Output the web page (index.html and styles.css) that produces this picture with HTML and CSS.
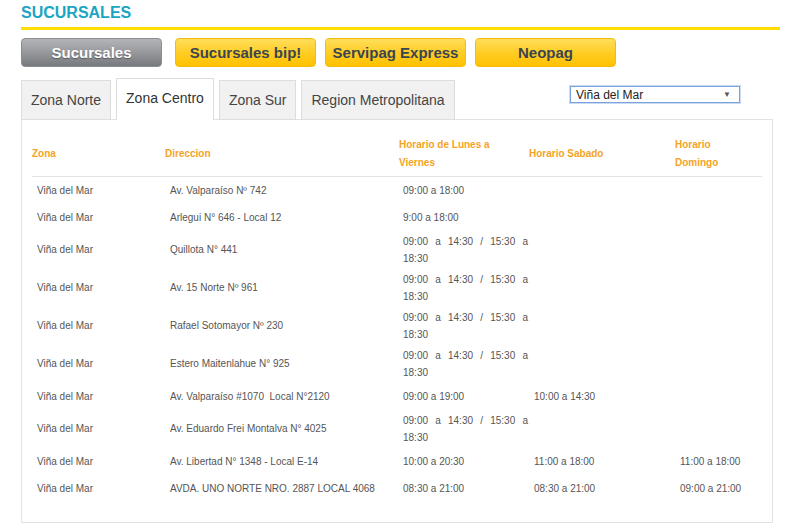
FILE: index.html
```html
<!DOCTYPE html>
<html lang="es">
<head>
<meta charset="utf-8">
<title>Sucursales</title>
<link rel="stylesheet" href="styles.css">
</head>
<body>
<div class="page">
  <h1 class="title">SUCURSALES</h1>
  <div class="rule"></div>
  <div class="btns">
    <a class="btn btn-gray">Sucursales</a>
    <a class="btn btn-yellow">Sucursales bip!</a>
    <a class="btn btn-yellow">Servipag Express</a>
    <a class="btn btn-yellow">Neopag</a>
  </div>
  <div class="zones">
    <div class="tabbar">
      <div class="tab">Zona Norte</div>
      <div class="tab active">Zona Centro</div>
      <div class="tab">Zona Sur</div>
      <div class="tab">Region Metropolitana</div>
      <div class="select"><span>Viña del Mar</span><span class="arrow">▼</span></div>
    </div>
    <div class="panel">
      <table class="grid">
        <colgroup>
          <col class="c1"><col class="c2"><col class="c3"><col class="c4"><col class="c5">
        </colgroup>
        <thead>
          <tr>
            <th>Zona</th>
            <th>Direccion</th>
            <th>Horario de Lunes a Viernes</th>
            <th>Horario Sabado</th>
            <th>Horario Domingo</th>
          </tr>
        </thead>
        <tbody>
          <tr><td>Viña del Mar</td><td>Av. Valparaíso Nº 742</td><td class="j">09:00 a 18:00</td><td></td><td></td></tr>
          <tr><td>Viña del Mar</td><td>Arlegui N° 646 - Local 12</td><td class="j">9:00 a 18:00</td><td></td><td></td></tr>
          <tr><td>Viña del Mar</td><td>Quillota N° 441</td><td class="j">09:00 a 14:30 / 15:30 a 18:30</td><td></td><td></td></tr>
          <tr><td>Viña del Mar</td><td>Av. 15 Norte Nº 961</td><td class="j">09:00 a 14:30 / 15:30 a 18:30</td><td></td><td></td></tr>
          <tr><td>Viña del Mar</td><td>Rafael Sotomayor Nº 230</td><td class="j">09:00 a 14:30 / 15:30 a 18:30</td><td></td><td></td></tr>
          <tr><td>Viña del Mar</td><td>Estero Maitenlahue N° 925</td><td class="j">09:00 a 14:30 / 15:30 a 18:30</td><td></td><td></td></tr>
          <tr><td>Viña del Mar</td><td>Av. Valparaíso #1070&nbsp; Local N°2120</td><td class="j">09:00 a 19:00</td><td>10:00 a 14:30</td><td></td></tr>
          <tr><td>Viña del Mar</td><td>Av. Eduardo Frei Montalva N° 4025</td><td class="j">09:00 a 14:30 / 15:30 a 18:30</td><td></td><td></td></tr>
          <tr><td>Viña del Mar</td><td>Av. Libertad N° 1348 - Local E-14</td><td class="j">10:00 a 20:30</td><td>11:00 a 18:00</td><td>11:00 a 18:00</td></tr>
          <tr><td>Viña del Mar</td><td>AVDA. UNO NORTE NRO. 2887 LOCAL 4068</td><td class="j">08:30 a 21:00</td><td>08:30 a 21:00</td><td>09:00 a 21:00</td></tr>
        </tbody>
      </table>
    </div>
  </div>
</div>
</body>
</html>
```

FILE: styles.css
```css
html, body {
  margin: 0;
  padding: 0;
  background: #ffffff;
}

.page {
  font-family: "Liberation Sans", Arial, sans-serif;
  padding: 3px 20px 0 21px;
  width: 759px;
}

.title {
  margin: 0;
  font-size: 16px;
  line-height: 20px;
  font-weight: bold;
  color: #1aa5c3;
}

.rule {
  margin-top: 4px;
  height: 3px;
  background: #ffde00;
}

.btns {
  display: flex;
  gap: 9px;
  margin-top: 8px;
}

.btn {
  display: flex;
  align-items: center;
  justify-content: center;
  width: 139px;
  height: 27px;
  border-radius: 4px;
  font-size: 15px;
  font-weight: bold;
  cursor: pointer;
}

.btn-gray {
  margin-right: 4px;
  color: #ffffff;
  background: linear-gradient(#b3b5b8 0%, #96989c 50%, #76797d 100%);
  border: 1px solid #8b8d90;
  text-shadow: 0 1px 1px rgba(0, 0, 0, 0.35);
}

.btn-yellow {
  color: #3a4550;
  background: linear-gradient(#ffdf5c 0%, #ffcd26 50%, #ffc200 100%);
  border: 1px solid #f3bb10;
}

.zones {
  width: 752px;
  margin-top: 11px;
}

.tabbar {
  display: flex;
  align-items: flex-end;
  gap: 5px;
  height: 42px;
}

.tab {
  box-sizing: border-box;
  height: 40px;
  padding: 0 9px;
  display: flex;
  align-items: center;
  font-size: 14px;
  color: #444444;
  background: #f1f1f1;
  border: 1px solid #dddddd;
}

.tab.active {
  position: relative;
  z-index: 1;
  height: 42px;
  padding-bottom: 4px;
  background: #ffffff;
  border-bottom: none;
  color: #333333;
}

.select {
  align-self: flex-start;
  margin: 8px 33px 0 auto;
  box-sizing: border-box;
  width: 170px;
  height: 17px;
  padding: 0 8px 0 5px;
  display: flex;
  align-items: center;
  justify-content: space-between;
  border: 1px solid #7aa3dc;
  box-shadow: 0 0 0 1px #c9daf2;
  font-size: 12px;
  color: #222222;
  background: #ffffff;
}

.select .arrow {
  font-size: 8px;
  color: #555555;
}

.panel {
  box-sizing: border-box;
  margin-top: -1px;
  height: 404px;
  border: 1px solid #e2e2e2;
  padding: 12px 9px 0 10px;
}

.grid {
  width: 730px;
  border-collapse: collapse;
  table-layout: fixed;
  font-size: 10px;
}

.c1 { width: 133px; }
.c2 { width: 234px; }
.c3 { width: 130px; }
.c4 { width: 146px; }
.c5 { width: 87px; }

.grid th {
  text-align: left;
  font-weight: bold;
  color: #f5a31f;
  line-height: 18px;
  padding: 4px 8px 4px 0;
  border-bottom: 1px solid #e3e3e3;
  vertical-align: middle;
}

.grid td {
  height: 24px;
  padding: 1.5px 1px 1.5px 5px;
  line-height: 17.5px;
  color: #555555;
  vertical-align: middle;
}

.grid td.j {
  text-align: justify;
  padding-left: 4px;
}
```
